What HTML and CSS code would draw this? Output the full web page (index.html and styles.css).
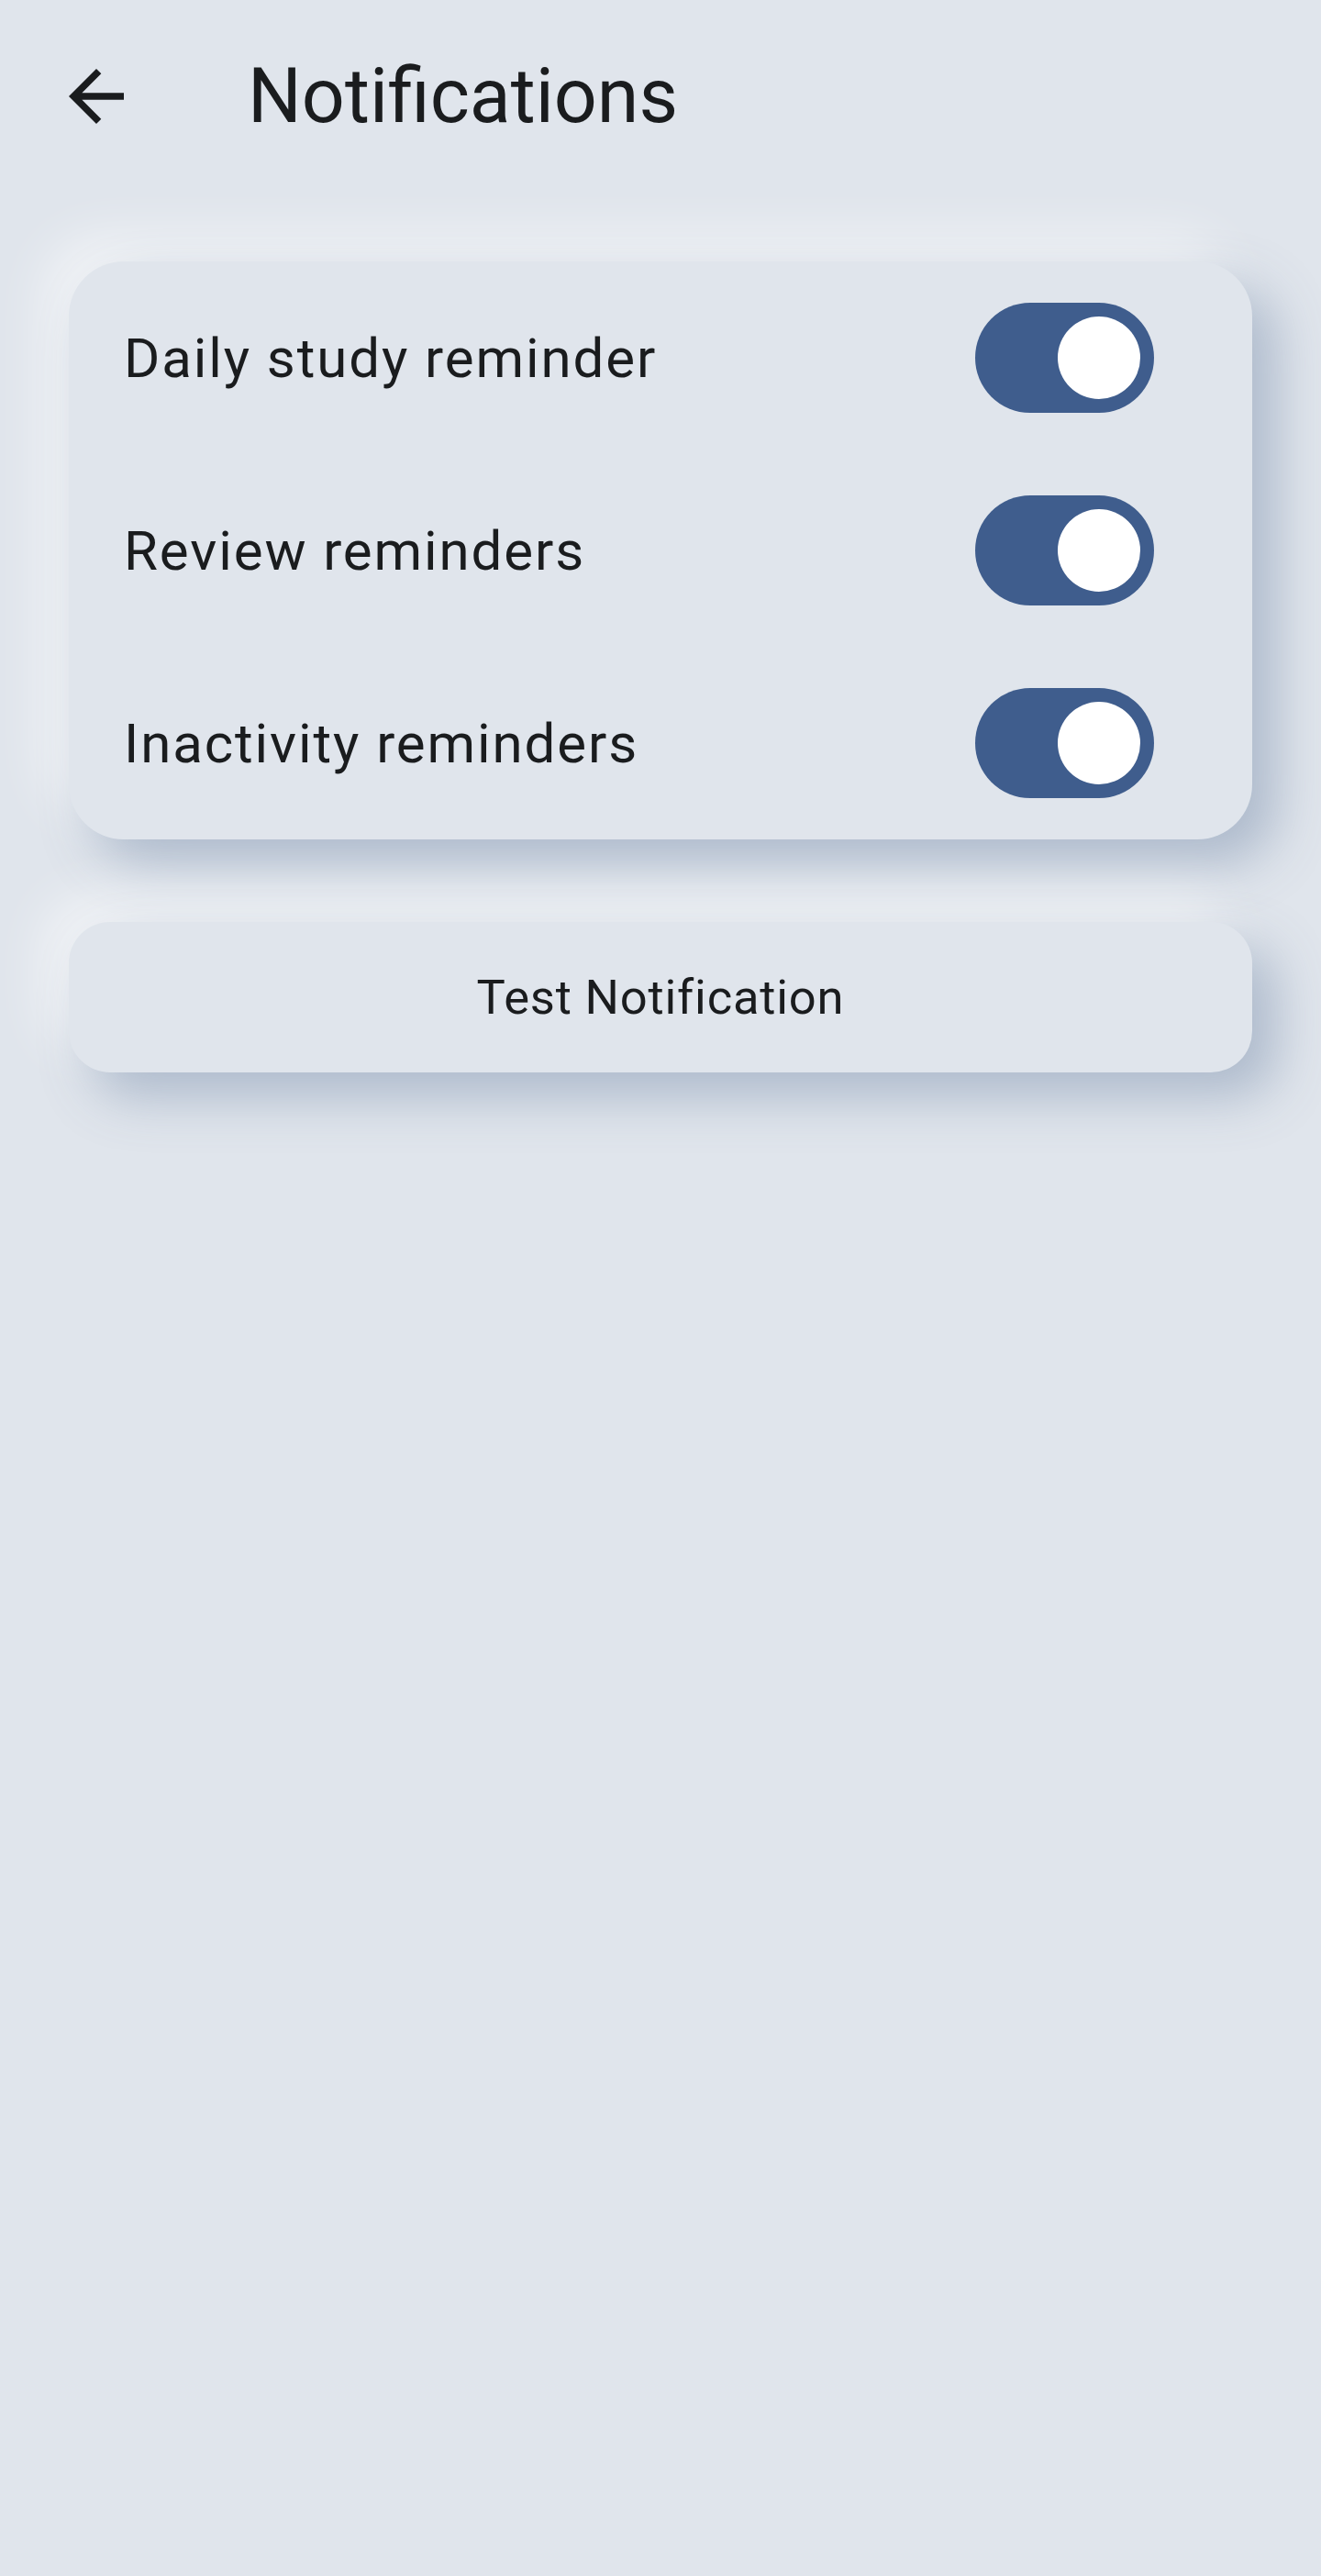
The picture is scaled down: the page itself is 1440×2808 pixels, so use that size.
FILE: index.html
```html
<!DOCTYPE html>
<html>
<head>
    <meta charset="UTF-8">
    <meta name="viewport" content="width=device-width, initial-scale=1.0">
    <title>Notifications</title>
    <link rel="stylesheet" href="styles.css">
</head>
<body>
    <header class="app_bar">
        <button class="back_btn" type="button" aria-label="Back">
            <svg viewBox="0 0 24 24" width="90" height="90">
                <path d="M20 11H7.83l5.59-5.59L12 4l-8 8 8 8 1.41-1.41L7.83 13H20v-2z" fill="currentColor"/>
            </svg>
        </button>
        <h1 class="title">Notifications</h1>
    </header>

    <main class="content">
        <section class="card">
            <label class="row">
                <span class="row_label">Daily study reminder</span>
                <input class="switch" type="checkbox" checked>
            </label>
            <label class="row">
                <span class="row_label">Review reminders</span>
                <input class="switch" type="checkbox" checked>
            </label>
            <label class="row">
                <span class="row_label">Inactivity reminders</span>
                <input class="switch" type="checkbox" checked>
            </label>
        </section>

        <button class="test_btn" type="button">Test Notification</button>
    </main>
</body>
</html>
```

FILE: styles.css
```css
html,
body {
    margin: 0;
    padding: 0;
}

html {
    background: #e0e5ec;
}

body {
    min-height: 100vh;
    color: #1a1c1e;
    font-family: Roboto, 'Liberation Sans', sans-serif;
}

/* app bar */
.app_bar {
    display: flex;
    align-items: center;
    height: 210px;
}

.back_btn {
    display: flex;
    width: 90px;
    height: 90px;
    margin-left: 60px;
    padding: 0;
    border: 0;
    background: transparent;
    color: #1a1c1e;
    cursor: pointer;
}

.title {
    margin: 0 0 0 120px;
    font-size: 82.5px;
    font-weight: 400;
    line-height: 1;
}

/* content */
.content {
    display: flex;
    flex-direction: column;
    gap: 90px;
    padding: 75px 75px 0;
}

.card,
.test_btn {
    background: #e0e5ec;
    box-shadow: 26px 26px 56px rgba(163, 177, 198, .85),
                -26px -26px 56px rgba(255, 255, 255, .6);
}

.card {
    border-radius: 60px;
}

.row {
    display: flex;
    align-items: center;
    justify-content: space-between;
    height: 210px;
    padding: 0 107px 0 60px;
    cursor: pointer;
}

.row_label {
    font-size: 60px;
    letter-spacing: 1.9px;
}

/* switch */
.switch {
    appearance: none;
    position: relative;
    width: 195px;
    height: 120px;
    margin: 0;
    border-radius: 60px;
    background: #3f5d8d;
    cursor: pointer;
}

.switch::after {
    content: '';
    position: absolute;
    top: 15px;
    right: 15px;
    width: 90px;
    height: 90px;
    border-radius: 50%;
    background: #fff;
}

/* button */
.test_btn {
    height: 164px;
    border: 0;
    border-radius: 45px;
    color: #1a1c1e;
    font-family: Roboto, 'Liberation Sans', sans-serif;
    font-size: 52.5px;
    letter-spacing: 0.8px;
    cursor: pointer;
}
```
